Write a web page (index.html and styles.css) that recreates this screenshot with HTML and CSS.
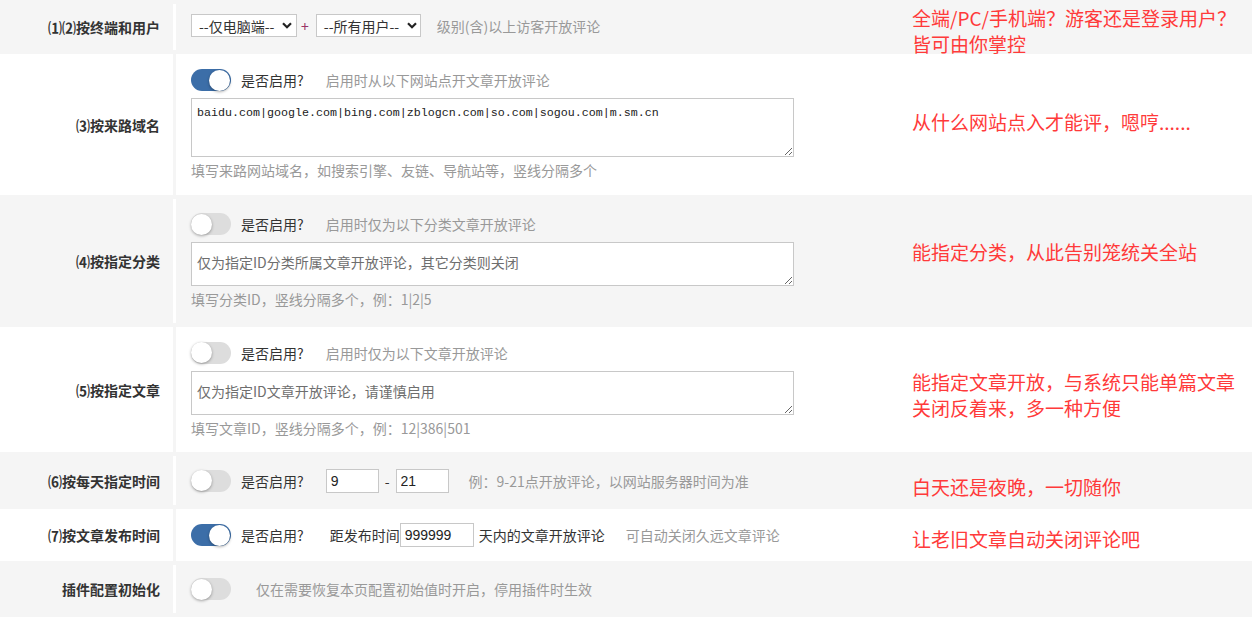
FILE: index.html
```html
<!DOCTYPE html>
<html lang="zh-CN">
<head>
<meta charset="utf-8">
<title>评论开放设置</title>
<link rel="stylesheet" href="styles.css">
</head>
<body>
<div class="form">
  <div class="row gray r1">
    <div class="label">⑴⑵按终端和用户</div>
    <div class="sep"></div>
    <div class="cell line">
      <div class="select s1"><span>--仅电脑端--</span><svg width="10" height="7" viewBox="0 0 10 7"><path d="M1 1.3 L5 5.3 L9 1.3" stroke="#222" stroke-width="2.2" fill="none"/></svg></div>
      <span class="plus">+</span>
      <div class="select s2"><span>--所有用户--</span><svg width="10" height="7" viewBox="0 0 10 7"><path d="M1 1.3 L5 5.3 L9 1.3" stroke="#222" stroke-width="2.2" fill="none"/></svg></div>
      <span class="hint ml16">级别(含)以上访客开放评论</span>
    </div>
    <div class="note n1">全端/PC/手机端？游客还是登录用户？皆可由你掌控</div>
  </div>

  <div class="row white r2">
    <div class="label">⑶按来路域名</div>
    <div class="sep"></div>
    <div class="cell stack">
      <div class="tline"><span class="switch on"><span class="knob"></span></span><span class="q">是否启用?</span><span class="hint">启用时从以下网站点开文章开放评论</span></div>
      <textarea class="ta tall">baidu.com|google.com|bing.com|zblogcn.com|so.com|sogou.com|m.sm.cn</textarea>
      <div class="hint sub">填写来路网站域名，如搜索引擎、友链、导航站等，竖线分隔多个</div>
    </div>
    <div class="note n2">从什么网站点入才能评，嗯哼......</div>
  </div>

  <div class="row gray r3">
    <div class="label">⑷按指定分类</div>
    <div class="sep"></div>
    <div class="cell stack">
      <div class="tline"><span class="switch"><span class="knob"></span></span><span class="q">是否启用?</span><span class="hint">启用时仅为以下分类文章开放评论</span></div>
      <textarea class="ta short" placeholder="仅为指定ID分类所属文章开放评论，其它分类则关闭"></textarea>
      <div class="hint sub">填写分类ID，竖线分隔多个，例：1|2|5</div>
    </div>
    <div class="note n3">能指定分类，从此告别笼统关全站</div>
  </div>

  <div class="row white r4">
    <div class="label">⑸按指定文章</div>
    <div class="sep"></div>
    <div class="cell stack">
      <div class="tline"><span class="switch"><span class="knob"></span></span><span class="q">是否启用?</span><span class="hint">启用时仅为以下文章开放评论</span></div>
      <textarea class="ta short" placeholder="仅为指定ID文章开放评论，请谨慎启用"></textarea>
      <div class="hint sub">填写文章ID，竖线分隔多个，例：12|386|501</div>
    </div>
    <div class="note n4">能指定文章开放，与系统只能单篇文章关闭反着来，多一种方便</div>
  </div>

  <div class="row gray r5">
    <div class="label">⑹按每天指定时间</div>
    <div class="sep"></div>
    <div class="cell line">
      <span class="switch"><span class="knob"></span></span><span class="q">是否启用?</span>
      <input class="num ml3 w53" type="text" value="9">
      <span class="dash">-</span>
      <input class="num w53" type="text" value="21">
      <span class="hint ml20">例：9-21点开放评论，以网站服务器时间为准</span>
    </div>
    <div class="note n5">白天还是夜晚，一切随你</div>
  </div>

  <div class="row white r6">
    <div class="label">⑺按文章发布时间</div>
    <div class="sep"></div>
    <div class="cell line">
      <span class="switch on"><span class="knob"></span></span><span class="q">是否启用?</span>
      <span class="ml4">距发布时间</span>
      <input class="num ml5 w74" type="text" value="999999">
      <span class="ml5">天内的文章开放评论</span>
      <span class="hint ml21">可自动关闭久远文章评论</span>
    </div>
    <div class="note n6">让老旧文章自动关闭评论吧</div>
  </div>

  <div class="row gray r7">
    <div class="label">插件配置初始化</div>
    <div class="sep"></div>
    <div class="cell line">
      <span class="switch"><span class="knob"></span></span>
      <span class="hint ml25">仅在需要恢复本页配置初始值时开启，停用插件时生效</span>
    </div>
  </div>
</div>
</body>
</html>
```

FILE: styles.css
```css
html, body {
  margin: 0;
  padding: 0;
  background: #fff;
}
body {
  font-family: "Noto Sans CJK SC", "Liberation Sans", sans-serif;
  font-size: 14px;
  color: #333;
  line-height: 20px;
}
.form {
  width: 1252px;
}
.row {
  display: flex;
  align-items: stretch;
}
.gray { background: #f5f5f5; }
.white { background: #fff; }
.r1 { height: 54px; }
.r2 { height: 141px; }
.r3 { height: 132px; }
.r4 { height: 125px; }
.r5 { height: 57px; }
.r6 { height: 52px; }
.r7 { height: 56px; }

.label {
  flex: none;
  width: 173px;
  box-sizing: border-box;
  padding-right: 13px;
  display: flex;
  align-items: center;
  justify-content: flex-end;
  font-weight: bold;
  color: #333;
  white-space: nowrap;
}
.sep {
  flex: none;
  width: 3px;
}
.gray .sep {
  background: #fff;
  margin: 4px 0;
}
.white .sep {
  background: #f5f5f5;
}
.cell {
  flex: none;
  width: 736px;
  box-sizing: border-box;
  padding-left: 15px;
  display: flex;
  white-space: nowrap;
}
.cell.line {
  align-items: center;
}
.r1 .cell {
  padding-bottom: 3px;
}
.cell.stack {
  flex-direction: column;
  justify-content: center;
}

.note {
  flex: none;
  width: 330px;
  align-self: flex-start;
  color: #ff3a3a;
  font-size: 19px;
  line-height: 26px;
}
.n1 { margin-top: 5px; }
.n2 { margin-top: 55px; }
.n3 { margin-top: 44px; }
.n4 { margin-top: 42px; }
.n5 { margin-top: 22px; }
.n6 { margin-top: 17px; }

.hint { color: #999; }
.hint.sub { margin-top: 3px; }
.ml3 { margin-left: 3px; }
.ml4 { margin-left: 4px; }
.ml5 { margin-left: 5px; }
.ml16 { margin-left: 16px; }
.ml20 { margin-left: 20px; }
.ml21 { margin-left: 21px; }
.ml25 { margin-left: 25px; }

.select {
  display: flex;
  align-items: center;
  justify-content: space-between;
  box-sizing: border-box;
  height: 23px;
  background: #fff;
  border: 1px solid #c8c8c8;
  color: #333;
}
.select span { line-height: 20px; }
.s1 { width: 106px; padding: 0 4px 0 7px; }
.s2 { width: 105px; padding: 0 3px 0 7px; }
.plus {
  color: #993366;
  margin: 0 7px 0 4px;
}

.tline {
  display: flex;
  align-items: center;
  height: 22px;
  margin-bottom: 7px;
}
.switch {
  flex: none;
  display: flex;
  justify-content: flex-start;
  align-items: center;
  box-sizing: border-box;
  width: 40px;
  height: 22px;
  border-radius: 11px;
  background: #dddddd;
}
.switch.on {
  justify-content: flex-end;
  background: #3c6ea8;
  padding-right: 1px;
}
.knob {
  width: 21px;
  height: 21px;
  border-radius: 50%;
  background: #fff;
  box-shadow: 0 1px 3px rgba(0, 0, 0, 0.35);
}
.q {
  margin-left: 10px;
  margin-right: 22px;
  color: #333;
}

.ta {
  display: block;
  box-sizing: border-box;
  width: 603px;
  margin: 0;
  border: 1px solid #c8c8c8;
  border-radius: 0;
  background: #fff;
  color: #222;
  font-family: "Liberation Mono", monospace;
  font-size: 11.67px;
  line-height: 20px;
  padding: 4px 5px;
  outline: none;
}
.ta.tall { height: 59px; }
.ta.short { height: 44px; padding-top: 9px; }
.ta::placeholder {
  font-family: "Noto Sans CJK SC", sans-serif;
  font-size: 14px;
  color: #6e6e6e;
}

.num {
  box-sizing: border-box;
  height: 24px;
  margin: 0;
  padding: 0 4px;
  border: 1px solid #c8c8c8;
  border-radius: 0;
  background: #fff;
  font-family: "Liberation Sans", sans-serif;
  font-size: 14px;
  color: #222;
  outline: none;
}
.w53 { width: 53px; }
.w74 { width: 74px; }
.dash {
  margin: 0 6px;
  color: #333;
}
```
